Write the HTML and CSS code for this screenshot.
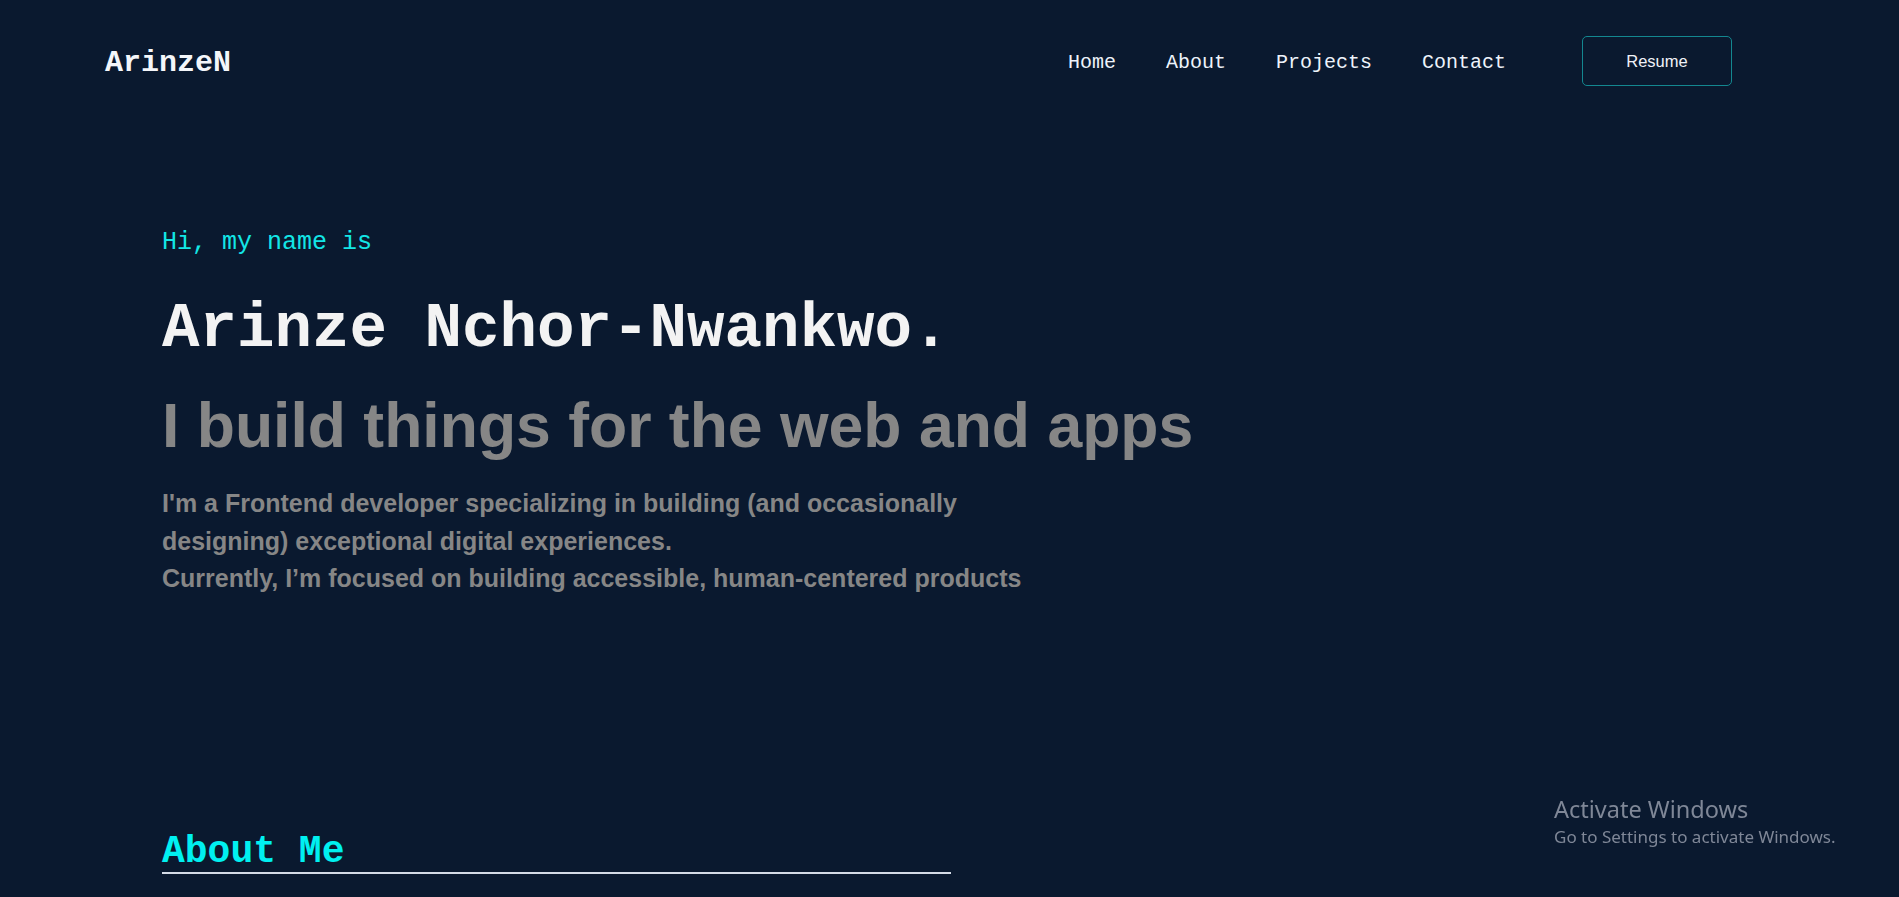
FILE: index.html
```html
<!DOCTYPE html>
<html lang="en">
<head>
<meta charset="utf-8">
<title>ArinzeN</title>
<link rel="stylesheet" href="styles.css">
</head>
<body>
<header class="site-header">
  <a class="logo" href="#">ArinzeN</a>
  <nav class="nav">
    <ul class="nav-list">
      <li><a class="nav-link" href="#">Home</a></li>
      <li><a class="nav-link" href="#">About</a></li>
      <li><a class="nav-link" href="#">Projects</a></li>
      <li><a class="nav-link" href="#">Contact</a></li>
    </ul>
    <a class="resume-btn" href="#">Resume</a>
  </nav>
</header>
<main>
  <section class="hero">
    <p class="hero-intro">Hi, my name is</p>
    <h1 class="hero-name">Arinze Nchor-Nwankwo.</h1>
    <h2 class="hero-tagline">I build things for the web and apps</h2>
    <p class="hero-desc">I'm a Frontend developer specializing in building (and occasionally designing) exceptional digital experiences.<br>Currently, I’m focused on building accessible, human-centered products</p>
  </section>
  <section class="about">
    <h2 class="section-title">About Me</h2>
  </section>
</main>
<div class="watermark">
  <div class="watermark-title">Activate Windows</div>
  <div class="watermark-sub">Go to Settings to activate Windows.</div>
</div>
</body>
</html>
```
FILE: styles.css
```css
html, body {
  margin: 0;
  padding: 0;
}
body {
  background: #0a192f;
  color: #e6f1ff;
  font-family: "Liberation Mono", "DejaVu Sans Mono", monospace;
  height: 897px;
  overflow: hidden;
}
a {
  text-decoration: none;
  color: inherit;
}
.site-header {
  height: 122px;
  display: flex;
  align-items: center;
  justify-content: space-between;
  padding: 0 167px 0 105px;
}
.logo {
  margin-top: 4px;
  font-size: 30px;
  font-weight: bold;
  color: #f4f6fa;
}
.nav {
  display: flex;
  align-items: center;
}
.nav-list {
  list-style: none;
  display: flex;
  gap: 50px;
  margin: 2px 0 0;
  padding: 0;
}
.nav-link {
  font-size: 20px;
  color: #eef3fb;
}
.resume-btn {
  margin-left: 76px;
  width: 148px;
  height: 48px;
  border: 1px solid #138790;
  border-radius: 5px;
  display: flex;
  align-items: center;
  justify-content: center;
  font-family: "Liberation Sans", Arial, sans-serif;
  font-size: 16.5px;
  color: #f0f2f8;
}
.hero {
  padding: 106px 0 0 162px;
}
.hero-intro {
  margin: 0;
  font-size: 25px;
  line-height: 30px;
  color: #13e6e6;
}
.hero-name {
  margin: 37px 0 0;
  font-size: 62.5px;
  line-height: 69px;
  font-weight: bold;
  color: #f3f3f3;
}
.hero-tagline {
  margin: 27px 0 0;
  font-family: "Liberation Sans", Arial, sans-serif;
  font-size: 62.5px;
  line-height: 69px;
  font-weight: bold;
  color: #868686;
}
.hero-desc {
  margin: 25px 0 0;
  max-width: 890px;
  font-family: "Liberation Sans", Arial, sans-serif;
  font-size: 25px;
  line-height: 1.5;
  font-weight: bold;
  color: #868686;
}
.about {
  padding: 233px 0 0 162px;
}
.section-title {
  margin: 0;
  width: 789px;
  font-size: 38px;
  line-height: 41px;
  font-weight: bold;
  color: #00f0f0;
  border-bottom: 2px solid #d4dbe6;
}
.watermark {
  position: fixed;
  left: 1554px;
  top: 793px;
  font-family: "Noto Sans", "Open Sans", sans-serif;
  color: #7f8797;
}
.watermark-title {
  font-size: 23.5px;
  line-height: 32px;
}
.watermark-sub {
  font-size: 17px;
  line-height: 24px;
}
```
